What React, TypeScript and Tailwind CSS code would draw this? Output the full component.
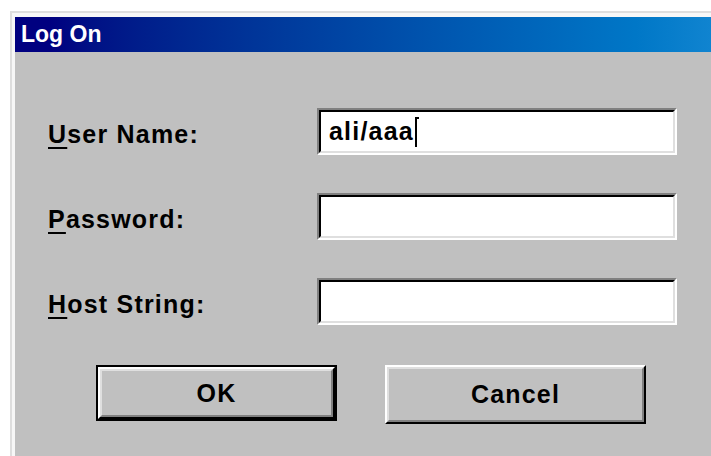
import React from "react";

const font = { fontFamily: '"Liberation Sans", Arial, sans-serif' };

function Field({ label, accel, value, caret }: { label: string; accel: string; value?: string; caret?: boolean }) {
  return (
    <>
      <div className="flex items-center h-[47px] pt-[6px] text-[25px] font-bold text-black leading-none tracking-[1.2px]">
        <span>
          <span className="underline underline-offset-[4px] decoration-[2px]">{accel}</span>
          {label}
        </span>
      </div>
      <div className="h-[47px] border-t-2 border-l-2 border-t-[#808080] border-l-[#808080] border-b-2 border-r-2 border-b-white border-r-white">
        <div className="h-full border-t-2 border-l-2 border-t-black border-l-black border-b-2 border-r-2 border-b-[#dfdfdf] border-r-[#dfdfdf] bg-white flex items-center pl-[8px]">
          {value && <span className="text-[25px] font-bold text-black leading-none tracking-[1.2px]">{value}</span>}
          {caret && (
            <span className="relative inline-block w-[2px] h-[30px] bg-black ml-[1px]">
              <span className="absolute left-0 top-0 w-[4px] h-[2px] bg-black" />
            </span>
          )}
        </div>
      </div>
    </>
  );
}

function Button({ children, isDefault, w, h }: { children: React.ReactNode; isDefault?: boolean; w: string; h: string }) {
  const bevel = (
    <div className="h-full w-full border-t-2 border-l-2 border-t-white border-l-white border-b-2 border-r-2 border-b-black border-r-black">
      <div className="h-full w-full border-t-2 border-l-2 border-t-[#dfdfdf] border-l-[#dfdfdf] border-b-2 border-r-2 border-b-[#808080] border-r-[#808080] bg-[#c0c0c0] flex items-center justify-center text-[25px] font-bold text-black leading-none tracking-[1.2px]">
        {children}
      </div>
    </div>
  );
  return (
    <div className={`${w} ${h}`}>
      {isDefault ? <div className="h-full w-full border-2 border-black">{bevel}</div> : bevel}
    </div>
  );
}

export default function App() {
  return (
    <div className="w-[711px] h-[456px] bg-white overflow-hidden pt-[11px] pl-[10px]" style={font}>
      <div className="h-[445px] border-t-2 border-l-2 border-[#dedede] bg-[#f7f7f7] pt-[4px] pl-[3px] flex flex-col">
        <div className="h-[35px] flex items-center pl-[6px] bg-gradient-to-r from-[#000080] from-[5%] to-[#1084d0]">
          <span className="text-white font-bold text-[23px] leading-none">Log On</span>
        </div>
        <div className="flex-1 bg-[#c0c0c0] flex flex-col pl-[33px] pt-[56px]">
          <div className="grid grid-cols-[269px_360px] gap-y-[38px]">
            <Field accel="U" label="ser Name:" value="ali/aaa" caret />
            <Field accel="P" label="assword:" />
            <Field accel="H" label="ost String:" />
          </div>
          <div className="flex gap-[48px] mt-[40px] ml-[48px] items-start">
            <Button isDefault w="w-[241px]" h="h-[56px]">OK</Button>
            <Button w="w-[261px]" h="h-[59px]">Cancel</Button>
          </div>
        </div>
      </div>
    </div>
  );
}
